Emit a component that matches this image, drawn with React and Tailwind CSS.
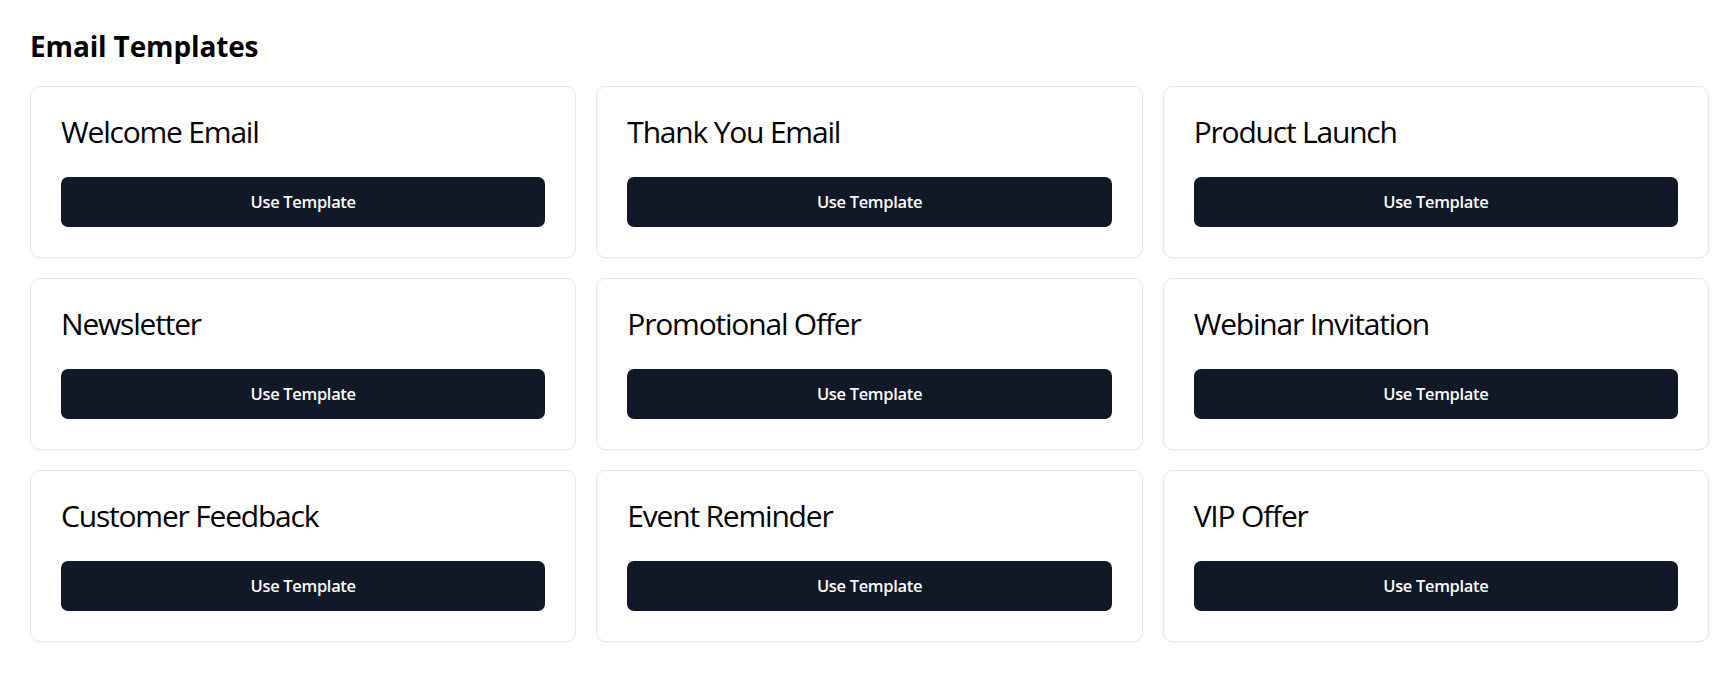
const templates = [
  "Welcome Email",
  "Thank You Email",
  "Product Launch",
  "Newsletter",
  "Promotional Offer",
  "Webinar Invitation",
  "Customer Feedback",
  "Event Reminder",
  "VIP Offer",
];

function TemplateCard({ name }) {
  return (
    <div className="rounded-[10px] border border-[#e2e8f0] bg-white shadow-[0_1px_2px_rgba(0,0,0,0.05)]">
      <div className="p-[30px]">
        <h3 className="text-[30px] leading-none tracking-[-0.04em] text-black">{name}</h3>
      </div>
      <div className="px-[30px] pb-[30px]">
        <button className="flex h-[50px] w-full items-center justify-center rounded-[7px] bg-[#111827] text-[16.5px] font-semibold tracking-[-0.02em] text-white">
          Use Template
        </button>
      </div>
    </div>
  );
}

export default function App() {
  return (
    <div
      className="min-h-screen bg-white pl-[30px] pr-[19px] pt-[29px]"
      style={{ fontFamily: '"Open Sans", "Noto Sans", sans-serif' }}
    >
      <h2 className="mb-[22px] text-[28px] font-bold leading-[35px] tracking-[-0.005em] text-black">Email Templates</h2>
      <div className="grid grid-cols-3 gap-[20px]">
        {templates.map((t) => (
          <TemplateCard key={t} name={t} />
        ))}
      </div>
    </div>
  );
}
